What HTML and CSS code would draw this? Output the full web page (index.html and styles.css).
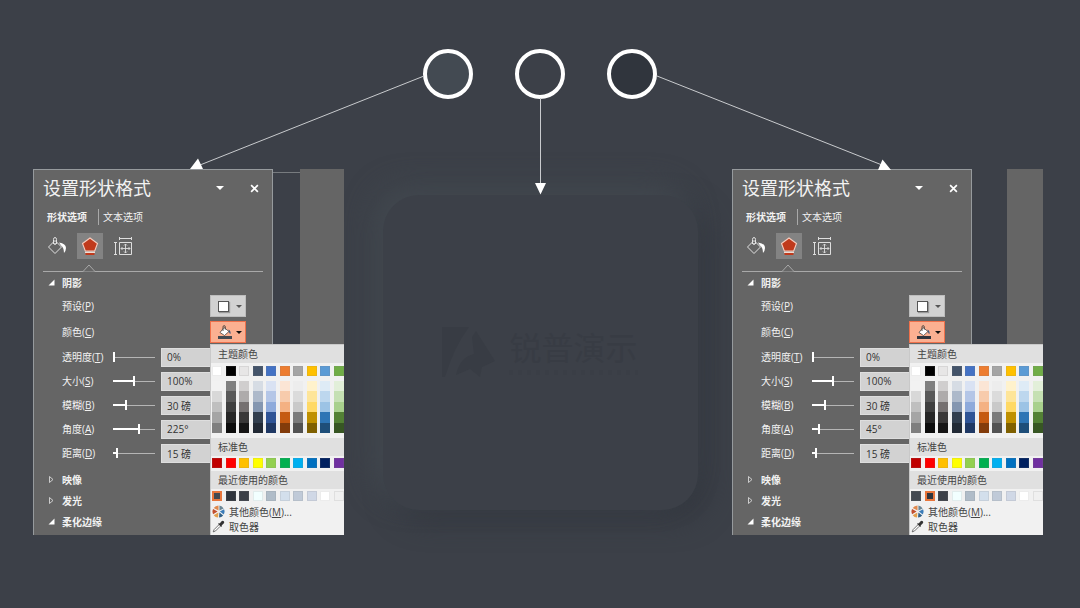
FILE: index.html
```html
<!DOCTYPE html>
<html lang="zh-CN">
<head>
<meta charset="utf-8">
<meta name="viewport" content="width=device-width, initial-scale=1">
<title>设置形状格式</title>
<link rel="stylesheet" href="styles.css">
</head>
<body>
<svg class="symbols" aria-hidden="true">
  <symbol id="i-fill" viewBox="0 0 20 20">
    <path d="M8 4.500 L1.500 11 L8 17.500 L14.500 11 Z M6.500 8 V3.500 Q6.500 1.500 8 1.500 Q9.500 1.500 9.500 3.500 V8" fill="none" stroke="#e2e2e2" stroke-width="1"/>
    <circle cx="8" cy="8" r="1" fill="#e2e2e2"/>
    <path d="M12 6.500 Q19 7.500 19 12 Q19 14.500 17 17 Q17 11.500 14 9.500 Z" fill="#fff"/>
  </symbol>
  <symbol id="i-effects" viewBox="0 0 20 20">
    <path d="M10 2 L17.500 7.500 L14.700 15 H5.300 L2.500 7.500 Z" fill="#c03a1c" stroke="#f6cdbf" stroke-width="1.100"/>
    <path d="M5.500 17 H14.500 V19 H5.500 Z" fill="#c03a1c"/>
    <path d="M5 16.300 H15" stroke="#fbe8df" stroke-width="1.200"/>
  </symbol>
  <symbol id="i-size" viewBox="0 0 20 20">
    <path d="M6.500 6.500 H18.500 V18.500 H6.500 Z M6.500 2.500 H18.500 M6.500 1 V4 M18.500 1 V4 M2.500 6.500 V18.500 M1 6.500 H4 M1 18.500 H4" fill="none" stroke="#dedede" stroke-width="1"/>
    <path d="M12.500 8 V17 M8 12.500 H17 M11 9.500 L12.500 8 L14 9.500 M11 15.500 L12.500 17 L14 15.500 M9.500 11 L8 12.500 L9.500 14 M15.500 11 L17 12.500 L15.500 14" fill="none" stroke="#dedede" stroke-width="0.900"/>
  </symbol>
  <symbol id="i-bucket" viewBox="0 0 14 14">
    <path d="M6 2.500 L11 6.500 L6.500 10.500 L2 7.500 Z" fill="#fff" stroke="#4d4540" stroke-width="0.800"/>
    <path d="M5 6 V2 Q5 0.600 6.200 0.600 Q7.300 0.600 7.300 2 V4.500" fill="none" stroke="#4d4540" stroke-width="0.900"/>
    <path d="M10.500 4.500 Q13 5.500 12.500 9 Q11.500 9 11 7 Z" fill="#3e5a80"/>
    <path class="bucket-bar" d="M0 11 H14 V14 H0 Z"/>
  </symbol>
  <symbol id="i-wheel" viewBox="0 0 14 14">
    <path d="M7 6 V0.500 A6.500 6.500 0 0 0 1.800 3.200 Z" fill="#e08a4e"/>
    <path d="M8 6 V0.600 A6.500 6.500 0 0 1 12.500 3.700 Z" fill="#6a8796"/>
    <path d="M8.500 7 L13 4.600 A6.500 6.500 0 0 1 12.600 10.300 Z" fill="#3b7cb8"/>
    <path d="M8 8 L12 11.200 A6.500 6.500 0 0 1 7.600 13.500 Z" fill="#2f5f86"/>
    <path d="M6.800 8 L6.500 13.500 A6.500 6.500 0 0 1 1.800 11 Z" fill="#e3a04e"/>
    <path d="M6 7 L1.200 10 A6.500 6.500 0 0 1 1.200 4.200 Z" fill="#c2502f"/>
  </symbol>
  <symbol id="i-dropper" viewBox="0 0 14 14">
    <path d="M8.300 3.800 L10.300 1.400 Q11.500 0.300 12.700 1.300 Q13.800 2.400 12.600 3.700 L10.300 5.800 L10.800 6.500 L9.800 7.500 L6.500 4.300 L7.500 3.200 Z" fill="#333"/>
    <path d="M7.300 5.300 L2.300 10.300 L1.300 12.800 L3.800 11.800 L8.800 6.800" fill="#fff" stroke="#555" stroke-width="0.900"/>
  </symbol>
  <symbol id="i-open" viewBox="0 0 7 7"><path d="M6.500 0.500 V6.500 H0.500 Z" fill="#fff"/></symbol>
  <symbol id="i-shut" viewBox="0 0 7 7"><path d="M1.500 0.500 L5 3.500 L1.500 6.500 Z" fill="none" stroke="#d8d8d8" stroke-width="0.900"/></symbol>
  <symbol id="i-down" viewBox="0 0 8 4"><path d="M0 0 H8 L4 4 Z" fill="currentColor"/></symbol>
  <symbol id="i-close" viewBox="0 0 8 8"><path d="M1 1 L7 7 M7 1 L1 7" stroke="#fff" stroke-width="1.500"/></symbol>
</svg>

<main class="stage">
  <div class="dots">
    <span class="dot dot-light"></span>
    <span class="dot dot-base"></span>
    <span class="dot dot-dark"></span>
  </div>

  <svg class="arrows" viewBox="0 0 1080 608" aria-hidden="true">
    <path d="M424 76 L200 165 M540.500 98 V185 M657 76 L882 165" fill="none" stroke="#c9cbce" stroke-width="1"/>
    <path d="M190 169 L198 158.500 L203 169 Z M535 183 H546 L540.500 194.500 Z M891 170 L882.500 159.500 L878 170 Z" fill="#fff"/>
  </svg>

  <div class="columns">
    <section class="panel panel-light">
      <div class="pane">
        <header class="pane-head">
          <h2 class="pane-title">设置形状格式</h2>
          <button class="plain" aria-label="任务窗格选项"><svg class="caret"><use href="#i-down"/></svg></button>
          <button class="plain" aria-label="关闭"><svg class="close"><use href="#i-close"/></svg></button>
        </header>
        <nav class="tabs">
          <button class="tab tab-on">形状选项</button>
          <button class="tab">文本选项</button>
        </nav>
        <div class="kinds">
          <button class="kind" aria-label="填充与线条"><svg class="kind-icon"><use href="#i-fill"/></svg></button>
          <button class="kind kind-on" aria-label="效果"><svg class="kind-icon"><use href="#i-effects"/></svg></button>
          <button class="kind" aria-label="大小与属性"><svg class="kind-icon"><use href="#i-size"/></svg></button>
        </div>
        <div class="rule"><svg class="notch" viewBox="0 0 14 8"><path d="M0 7.500 H1 L7 1 L13 7.500 H14" fill="#656565" stroke="#a9a9a9"/></svg></div>
        <button class="fold"><svg class="fold-icon"><use href="#i-open"/></svg>阴影</button>
        <div class="row row-drop"><span class="name">预设(<u>P</u>)</span>
          <button class="drop" aria-label="预设"><span class="preset"></span><svg class="drop-caret"><use href="#i-down"/></svg></button></div>
        <div class="row row-drop"><span class="name">颜色(<u>C</u>)</span>
          <button class="drop drop-on" aria-label="颜色"><svg class="bucket"><use href="#i-bucket"/></svg><svg class="drop-caret"><use href="#i-down"/></svg></button></div>
        <div class="row"><label class="name" for="a1">透明度(<u>T</u>)</label><input class="slider" id="a1" type="range" value="0" style="--v:0%"><input class="value" aria-label="透明度" value="0%"></div>
        <div class="row"><label class="name" for="a2">大小(<u>S</u>)</label><input class="slider" id="a2" type="range" value="50" style="--v:50%"><input class="value" aria-label="大小" value="100%"></div>
        <div class="row"><label class="name" for="a3">模糊(<u>B</u>)</label><input class="slider" id="a3" type="range" value="31" style="--v:31%"><input class="value" aria-label="模糊" value="30 磅"></div>
        <div class="row"><label class="name" for="a4">角度(<u>A</u>)</label><input class="slider" id="a4" type="range" value="63" style="--v:63%"><input class="value" aria-label="角度" value="225°"></div>
        <div class="row"><label class="name" for="a5">距离(<u>D</u>)</label><input class="slider" id="a5" type="range" value="8" style="--v:8%"><input class="value" aria-label="距离" value="15 磅"></div>
        <div class="folds">
          <button class="fold"><svg class="fold-icon"><use href="#i-shut"/></svg>映像</button>
          <button class="fold"><svg class="fold-icon"><use href="#i-shut"/></svg>发光</button>
          <button class="fold"><svg class="fold-icon"><use href="#i-open"/></svg>柔化边缘</button>
        </div>
      </div>
      <div class="gap"></div>
      <div class="strip"></div>
      <div class="menu">
        <h3 class="menu-head">主题颜色</h3>
        <div class="swatches theme"></div>
        <div class="ramps"></div>
        <h3 class="menu-head">标准色</h3>
        <div class="swatches standard"></div>
        <h3 class="menu-head">最近使用的颜色</h3>
        <div class="swatches recent" data-picked="0"></div>
        <button class="menu-item"><svg class="menu-icon"><use href="#i-wheel"/></svg><span>其他颜色(<u>M</u>)...</span></button>
        <button class="menu-item"><svg class="menu-icon"><use href="#i-dropper"/></svg><span>取色器</span></button>
      </div>
    </section>

    <div class="card">
      <svg class="brand-mark" viewBox="0 0 54 52" aria-hidden="true">
        <path d="M0 0 H27 Q12 20 3 50 H0 Z M34 4 L53 34 L40 40 L38 50 L28 42 L14 48 Q18 30 32 27 L30 10 Z" fill="#383c44"/>
      </svg>
      <div class="brand-words">
        <span class="brand-name">锐普演示</span>
        <span class="brand-line"></span>
      </div>
    </div>

    <section class="panel panel-dark">
      <div class="pane">
        <header class="pane-head">
          <h2 class="pane-title">设置形状格式</h2>
          <button class="plain" aria-label="任务窗格选项"><svg class="caret"><use href="#i-down"/></svg></button>
          <button class="plain" aria-label="关闭"><svg class="close"><use href="#i-close"/></svg></button>
        </header>
        <nav class="tabs">
          <button class="tab tab-on">形状选项</button>
          <button class="tab">文本选项</button>
        </nav>
        <div class="kinds">
          <button class="kind" aria-label="填充与线条"><svg class="kind-icon"><use href="#i-fill"/></svg></button>
          <button class="kind kind-on" aria-label="效果"><svg class="kind-icon"><use href="#i-effects"/></svg></button>
          <button class="kind" aria-label="大小与属性"><svg class="kind-icon"><use href="#i-size"/></svg></button>
        </div>
        <div class="rule"><svg class="notch" viewBox="0 0 14 8"><path d="M0 7.500 H1 L7 1 L13 7.500 H14" fill="#656565" stroke="#a9a9a9"/></svg></div>
        <button class="fold"><svg class="fold-icon"><use href="#i-open"/></svg>阴影</button>
        <div class="row row-drop"><span class="name">预设(<u>P</u>)</span>
          <button class="drop" aria-label="预设"><span class="preset"></span><svg class="drop-caret"><use href="#i-down"/></svg></button></div>
        <div class="row row-drop"><span class="name">颜色(<u>C</u>)</span>
          <button class="drop drop-on" aria-label="颜色"><svg class="bucket"><use href="#i-bucket"/></svg><svg class="drop-caret"><use href="#i-down"/></svg></button></div>
        <div class="row"><label class="name" for="b1">透明度(<u>T</u>)</label><input class="slider" id="b1" type="range" value="0" style="--v:0%"><input class="value" aria-label="透明度" value="0%"></div>
        <div class="row"><label class="name" for="b2">大小(<u>S</u>)</label><input class="slider" id="b2" type="range" value="50" style="--v:50%"><input class="value" aria-label="大小" value="100%"></div>
        <div class="row"><label class="name" for="b3">模糊(<u>B</u>)</label><input class="slider" id="b3" type="range" value="31" style="--v:31%"><input class="value" aria-label="模糊" value="30 磅"></div>
        <div class="row"><label class="name" for="b4">角度(<u>A</u>)</label><input class="slider" id="b4" type="range" value="14" style="--v:14%"><input class="value" aria-label="角度" value="45°"></div>
        <div class="row"><label class="name" for="b5">距离(<u>D</u>)</label><input class="slider" id="b5" type="range" value="8" style="--v:8%"><input class="value" aria-label="距离" value="15 磅"></div>
        <div class="folds">
          <button class="fold"><svg class="fold-icon"><use href="#i-shut"/></svg>映像</button>
          <button class="fold"><svg class="fold-icon"><use href="#i-shut"/></svg>发光</button>
          <button class="fold"><svg class="fold-icon"><use href="#i-open"/></svg>柔化边缘</button>
        </div>
      </div>
      <div class="gap"></div>
      <div class="strip"></div>
      <div class="menu">
        <h3 class="menu-head">主题颜色</h3>
        <div class="swatches theme"></div>
        <div class="ramps"></div>
        <h3 class="menu-head">标准色</h3>
        <div class="swatches standard"></div>
        <h3 class="menu-head">最近使用的颜色</h3>
        <div class="swatches recent" data-picked="1"></div>
        <button class="menu-item"><svg class="menu-icon"><use href="#i-wheel"/></svg><span>其他颜色(<u>M</u>)...</span></button>
        <button class="menu-item"><svg class="menu-icon"><use href="#i-dropper"/></svg><span>取色器</span></button>
      </div>
    </section>
  </div>
</main>
<script src="palette.js"></script>
</body>
</html>
```
FILE: styles.css
```css
* { box-sizing: border-box; }

body {
  margin: 0;
  min-height: 100vh;
  background: #3c4048;
  color: #f2f2f2;
  font: 10px/16px "Open Sans", "Noto Sans CJK SC", sans-serif;
}

button, input { font: inherit; color: inherit; margin: 0; padding: 0; border: 0; border-radius: 0; background: none; }
h2, h3 { margin: 0; font-weight: 400; }
u { text-underline-offset: 1px; }
svg { display: block; flex: none; }
.symbols { position: absolute; width: 0; height: 0; }

.stage {
  position: relative;
  max-width: 1080px;
  margin: 0 auto;
  padding-top: 49px;
}

.dots { display: flex; justify-content: center; gap: 42px; }
.dot { width: 50px; height: 50px; border: 4px solid #fff; border-radius: 50%; }
.dot-light { background: #434a52; }
.dot-base { background: #3c4048; }
.dot-dark { background: #30353d; }

.arrows { position: absolute; z-index: 2; top: 0; left: 0; width: 100%; pointer-events: none; }

.columns {
  display: flex;
  justify-content: space-between;
  align-items: flex-start;
  padding: 70px 37px 0 33px;
}

/* task pane */
.panel { position: relative; display: flex; width: 311px; }
.pane {
  width: 240px;
  padding-bottom: 3px;
  background: #656565;
  border: 1px solid #969a9d;
  border-bottom: 0;
}
.gap { flex: 1; }
.panel-light .gap { border-top: 1px solid #777b7f; margin-top: 3px; }
.strip { background: #656565; }
.panel-light .strip { width: 44px; }
.panel-dark .strip { width: 36px; }

.pane-head { display: flex; align-items: center; height: 37px; padding: 0 9px 1px; }
.pane-title { flex: 1; font-size: 18px; line-height: 28px; }
.plain { display: flex; padding: 4px; }
.plain + .plain { margin-left: 18px; }
.caret { width: 8px; height: 4px; color: #fff; }
.close { width: 9px; height: 9px; }

.tabs { display: flex; align-items: center; height: 20px; padding-left: 13px; }
.tab-on { font-weight: 700; padding-right: 11px; }
.tab + .tab { padding-left: 4px; border-left: 1px solid #a9a9a9; }

.kinds { display: flex; gap: 7px; padding: 6px 0 0 10px; }
.kind { display: grid; place-items: center; width: 26px; height: 26px; }
.kind-on { background: #838383; }
.kind-icon { width: 20px; height: 20px; }

.rule { display: flex; margin: 5px 9px 0; padding-left: 39px; background: linear-gradient(#a9a9a9, #a9a9a9) bottom / 100% 1px no-repeat; }
.notch { width: 14px; height: 8px; }

.fold { display: flex; align-items: center; gap: 7px; height: 21px; padding-left: 14px; font-weight: 700; }
.fold-icon { width: 7px; height: 7px; }
.folds { padding-top: 4px; }

.row { display: flex; align-items: center; height: 24px; padding-left: 28px; overflow: hidden; }
.row-drop { height: 26px; }
.name { width: 51px; white-space: nowrap; }
.row-drop .name { width: 148px; }

.drop {
  display: flex;
  align-items: center;
  justify-content: space-between;
  width: 36px;
  height: 22px;
  padding: 0 3px 0 7px;
  background: #d2d2d2;
  color: #555;
  border: 1px solid #bdbdbd;
}
.drop-on { background: #fbb091; color: #111; border-color: #f0714b; }
.drop-caret { width: 6px; height: 3px; }
.preset { width: 11px; height: 11px; background: #fff; border: 1px solid #555; box-shadow: 1px 1px 1px #999; }
.bucket { width: 14px; height: 14px; }
.panel-light .bucket { fill: #434a52; }
.panel-dark .bucket { fill: #30353d; }

.slider { appearance: none; width: 42px; height: 12px; background: none; }
.slider::-webkit-slider-runnable-track {
  height: 12px;
  background:
    linear-gradient(#fff, #fff) left center / var(--v) 2px no-repeat,
    linear-gradient(#b5b5b5, #b5b5b5) center / 100% 1px no-repeat;
}
.slider::-webkit-slider-thumb { appearance: none; width: 2px; height: 10px; margin-top: 1px; background: #fff; }

.value {
  width: 60px;
  height: 19px;
  margin-left: 6px;
  padding-left: 5px;
  background: #d2d2d2;
  border: 1px solid #dedede;
  color: #333;
}

/* colour menu, opened over the pane */
.menu {
  position: absolute;
  right: 0;
  bottom: 0;
  width: 134px;
  padding-bottom: 1px;
  overflow: hidden;
  background: #f1f1f1;
  border: 1px solid #c9c9c9;
  border-width: 1px 0 0 1px;
  color: #444;
}
.menu-head { height: 18px; padding-left: 7px; background: #e0e0e0; font-size: 10px; line-height: 18px; }
.swatches { display: flex; justify-content: space-between; padding: 2px 0 3px 1px; }
.swatches.theme { padding: 3px 0 5px 1px; }
.swatch { width: 10px; height: 10px; border: 1px solid rgba(128, 128, 128, 0.15); }
.swatch.picked { border: 2px solid #e8763c; }
.ramps { display: flex; justify-content: space-between; padding: 0 0 5px 1px; }
.ramp { display: grid; grid-template-rows: repeat(5, 1fr); width: 10px; height: 52px; }
.menu-item { display: flex; align-items: center; gap: 4px; height: 15px; padding-left: 1px; }
.menu-icon { width: 13px; height: 13px; }

/* raised card */
.card {
  display: flex;
  align-items: center;
  justify-content: center;
  gap: 13px;
  width: 315px;
  height: 315px;
  margin: 26px 0 0 4px;
  border-radius: 36px;
  background: #3c4048;
  box-shadow: -10px -10px 28px #42484f, 10px 10px 28px #33373f;
}
.brand-mark { width: 54px; height: 52px; }
.brand-words { display: grid; gap: 4px; color: #383c44; }
.brand-name { font-size: 32px; line-height: 36px; }
.brand-line { height: 5px; background: repeating-linear-gradient(90deg, #3a3e46 0 4px, transparent 4px 9px); }
```
FILE: palette.js
```js
const theme = ['#ffffff', '#000000', '#e7e6e6', '#44546a', '#4472c4', '#ed7d31', '#a5a5a5', '#ffc000', '#5b9bd5', '#70ad47'];
const ramps = [
  ['#f2f2f2', '#d8d8d8', '#bfbfbf', '#a5a5a5', '#7f7f7f'],
  ['#7f7f7f', '#595959', '#3f3f3f', '#262626', '#0c0c0c'],
  ['#d0cece', '#aeabab', '#757070', '#3a3838', '#171616'],
  ['#d6dce4', '#adb9ca', '#8496b0', '#323f4f', '#222a35'],
  ['#d9e2f3', '#b4c6e7', '#8eaadb', '#2f5496', '#1f3864'],
  ['#fbe5d5', '#f7cbac', '#f4b183', '#c55a11', '#833c0b'],
  ['#ededed', '#dbdbdb', '#c9c9c9', '#7b7b7b', '#525252'],
  ['#fff2cc', '#fee599', '#ffd965', '#bf9000', '#7f6000'],
  ['#deebf6', '#bdd7ee', '#9cc3e5', '#2e75b5', '#1e4e79'],
  ['#e2efd9', '#c5e0b3', '#a8d08d', '#538135', '#375623']
];
const standard = ['#c00000', '#ff0000', '#ffc000', '#ffff00', '#92d050', '#00b050', '#00b0f0', '#0070c0', '#002060', '#7030a0'];
const recent = ['#434a52', '#30353d', '#3c4048', '#f2ffff', '#b0bcc8', '#d3dfec', '#c0cad8', '#d0d8e6', '#ffffff', '#f0f0f0'];

function chip(color, className) {
  const button = document.createElement('button');
  button.className = className;
  button.style.background = color;
  button.setAttribute('aria-label', color);
  return button;
}

document.querySelectorAll('.menu').forEach((menu) => {
  menu.querySelector('.theme').append(...theme.map((c) => chip(c, 'swatch')));
  menu.querySelector('.standard').append(...standard.map((c) => chip(c, 'swatch')));
  const row = menu.querySelector('.recent');
  row.append(...recent.map((c, i) => chip(c, i === Number(row.dataset.picked) ? 'swatch picked' : 'swatch')));
  menu.querySelector('.ramps').append(...ramps.map((tones) => {
    const ramp = document.createElement('div');
    ramp.className = 'ramp';
    ramp.append(...tones.map((c) => chip(c, 'tone')));
    return ramp;
  }));
});
```
